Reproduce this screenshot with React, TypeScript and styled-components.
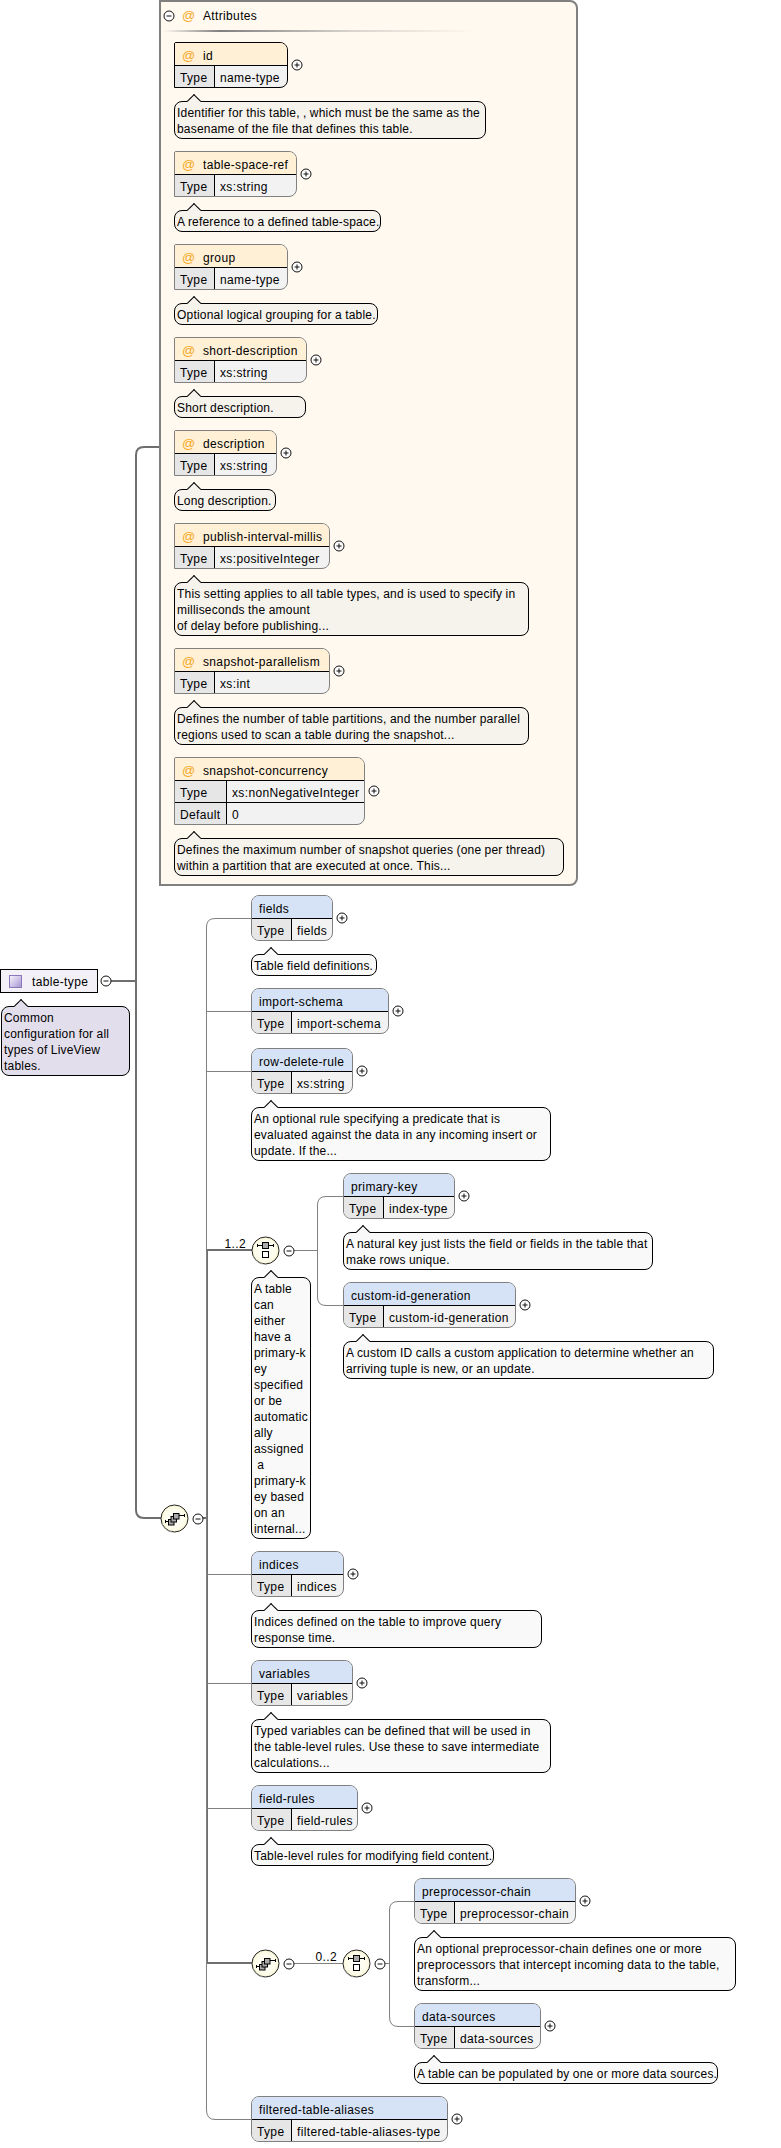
import React from "react";
import styled, { createGlobalStyle } from "styled-components";

const GlobalStyle = createGlobalStyle`
  html, body {
    margin: 0;
    padding: 0;
    background: #fff;
  }
  body {
    font-family: "Liberation Sans", Arial, sans-serif;
    font-size: 12px;
    line-height: 16px;
    color: #000;
  }
`;

const Page = styled.div`
  position: relative;
  z-index: 0;
  width: 781px;
  height: 2148px;
  overflow: hidden;
  display: flex;
`;

const Wires = styled.svg`
  position: absolute;
  left: 0;
  top: 0;
  z-index: -1;
`;

const RootColumn = styled.div`
  width: 159px;
  flex-shrink: 0;
  padding-top: 969px;
`;

const RootRow = styled.div`
  display: flex;
  align-items: center;
  gap: 2px;
`;

const RootBox = styled.div`
  box-sizing: border-box;
  width: 98px;
  height: 24px;
  display: flex;
  align-items: center;
  gap: 10px;
  padding-left: 8px;
  border: 1px solid #000;
  background: #f3f0f8;
  letter-spacing: 0.35px;
`;

const RootSwatch = styled.span`
  box-sizing: border-box;
  width: 13px;
  height: 13px;
  border: 1px solid #8a78bb;
  background: linear-gradient(135deg, #f6f3fb, #a796d4);
`;

const RootLabel = styled.span`
  padding-top: 2px;
`;

const RootNote = styled.div`
  margin: 13px 0 0 1px;
`;

const MainColumn = styled.div`
  width: 419px;
  flex-shrink: 0;
`;

const Panel = styled.div`
  box-sizing: border-box;
  width: 419px;
  border: 2px solid #808080;
  border-radius: 0 8px 8px 0;
  background: #fff9f0;
`;

const PanelHeader = styled.div`
  height: 28px;
  display: flex;
  align-items: center;
  padding-left: 2px;
`;

const PanelTitle = styled.span`
  margin-left: 8px;
  letter-spacing: 0.35px;
`;

const PanelRule = styled.div`
  width: 314px;
  height: 2px;
  margin-left: 2px;
  background: linear-gradient(90deg, #fff9f0 0%, #808080 18%, #d8d4cd 60%, #fff9f0 100%);
`;

const PanelBody = styled.div`
  display: flex;
  flex-direction: column;
  gap: 12px;
  padding: 10px 13px 8px;
`;

const AttrGlyph = styled.span`
  width: 13px;
  margin-left: 7px;
  color: #f7a823;
  font-size: 13px;
  line-height: 16px;
  letter-spacing: 0;
`;

const BelowPanel = styled.div`
  display: flex;
  margin-top: 9px;
`;

const SequenceColumn = styled.div`
  width: 92px;
  flex-shrink: 0;
  padding: 609px 0 0 1px;
  box-sizing: border-box;
`;

const ItemColumn = styled.div`
  display: flex;
  flex-direction: column;
  gap: 12px;
`;

const Item = styled.div<{ $after?: number }>`
  margin-bottom: ${(p) => p.$after ?? 0}px;
`;

const NodeRow = styled.div`
  display: flex;
  align-items: center;
  gap: 3px;
`;

const NodeBox = styled.div<{ $attr?: boolean; $width: number; $dark?: boolean }>`
  box-sizing: border-box;
  width: ${(p) => p.$width}px;
  border: 1px solid ${(p) => (p.$dark ? "#000" : "#808080")};
  border-radius: ${(p) => (p.$attr ? "2px 8px 8px 0" : "8px")};
  overflow: hidden;
  background: #f2f2f2;
  letter-spacing: 0.35px;
`;

const NodeHead = styled.div<{ $attr?: boolean }>`
  box-sizing: border-box;
  height: 22px;
  display: flex;
  align-items: center;
  padding: 4px 0 0 ${(p) => (p.$attr ? "0" : "7px")};
  gap: 8px;
  background: ${(p) => (p.$attr ? "#fff0d6" : "#d6e3f6")};
`;

const NodeLine = styled.div`
  display: flex;
  height: 21px;
  border-top: 1px solid #000;
  line-height: 25px;
`;

const NodeKey = styled.div<{ $width: number }>`
  box-sizing: border-box;
  width: ${(p) => p.$width}px;
  flex-shrink: 0;
  padding-left: 5px;
  border-right: 1px solid #000;
  background: #e6e6e6;
`;

const NodeValue = styled.div`
  padding-left: 5px;
  white-space: nowrap;
`;

const Note = styled.div<{ $width: number; $tone?: "panel" | "root" }>`
  position: relative;
  box-sizing: border-box;
  width: ${(p) => p.$width}px;
  padding: 3px 2px 1px;
  border: 1px solid #000;
  border-radius: 8px;
  white-space: pre;
  letter-spacing: 0.2px;
  word-spacing: -0.2px;
  background: ${(p) =>
    p.$tone === "panel" ? "#f6f2ec" : p.$tone === "root" ? "#e3deec" : "#f9f9f9"};

  &::before {
    content: "";
    position: absolute;
    left: 14px;
    top: -6px;
    box-sizing: border-box;
    width: 10px;
    height: 10px;
    border-top: 1px solid #000;
    border-left: 1px solid #000;
    background: inherit;
    transform: rotate(45deg);
  }
`;

const NoteGap = styled.div`
  margin-top: 13px;
`;

const ParticleRow = styled.div`
  display: flex;
`;

const ParticleHead = styled.div<{ $top: number; $width: number }>`
  box-sizing: border-box;
  width: ${(p) => p.$width}px;
  flex-shrink: 0;
  padding-top: ${(p) => p.$top}px;
`;

const ParticleLine = styled.div`
  display: flex;
  align-items: center;
`;

const ParticleSlot = styled.div`
  position: relative;
  width: 29px;
  height: 29px;
  flex-shrink: 0;
`;

const Occurs = styled.span`
  position: absolute;
  right: calc(100% + 5px);
  top: 0;
  white-space: nowrap;
  letter-spacing: 0.35px;
`;

const Spacer = styled.div<{ $width: number }>`
  width: ${(p) => p.$width}px;
  flex-shrink: 0;
`;

const ParticleNote = styled.div`
  margin-top: 12px;
`;

const ExpanderIcon = styled.svg<{ $gap?: number }>`
  flex-shrink: 0;
  margin-left: ${(p) => p.$gap ?? 0}px;
  display: block;
`;

const Expander = ({ open, gap }: { open?: boolean; gap?: number }) => (
  <ExpanderIcon $gap={gap} width="12" height="12" viewBox="0 0 12 12">
    <circle cx="6" cy="6" r="5" fill="#fff" stroke="#111" strokeWidth="1" />
    <path d="M3.5 6H8.5" stroke="#111" strokeWidth="1" />
    {!open && <path d="M6 3.5V8.5" stroke="#111" strokeWidth="1" />}
  </ExpanderIcon>
);

const ParticleFace = ({ kind }: { kind: "sequence" | "choice" }) => (
  <svg width="29" height="29" viewBox="0 0 29 29">
    <defs>
      <radialGradient id={`face-${kind}`} cx="50%" cy="50%" r="55%">
        <stop offset="0%" stopColor="#ffffff" />
        <stop offset="70%" stopColor="#fdfcea" />
        <stop offset="100%" stopColor="#f6f2c8" />
      </radialGradient>
    </defs>
    <circle cx="14.5" cy="14.5" r="13.5" fill={`url(#face-${kind})`} stroke="#222" strokeWidth="1" />
    <path d="M2 20a13.5 13.5 0 0 0 10 8" fill="none" stroke="#999" strokeWidth="1" />
    {kind === "choice" ? (
      <g stroke="#000" strokeWidth="1">
        <path d="M6.5 9.5H22.5M6.5 8V11M22.5 8V11" fill="none" />
        <rect x="11.5" y="6.5" width="6" height="6" fill="#aaa" />
        <rect x="11.5" y="15.5" width="6" height="6" fill="#fff" />
      </g>
    ) : (
      <g stroke="#000" strokeWidth="1">
        <path d="M5.5 17.5H9M5.5 16V19M18 11.5H24.5M24.5 10V13" fill="none" />
        <rect x="8.5" y="15.5" width="5.5" height="5.5" fill="#aaa" />
        <rect x="11" y="12.5" width="5.5" height="5.5" fill="#aaa" />
        <rect x="13.5" y="9.5" width="5.5" height="5.5" fill="#aaa" />
      </g>
    )}
  </svg>
);

type NodeProps = {
  name: string;
  type: string;
  width: number;
  keyWidth?: number;
  attr?: boolean;
  dark?: boolean;
  fallback?: string;
};

const SchemaNode = ({ name, type, width, keyWidth = 40, attr, dark, fallback }: NodeProps) => (
  <NodeRow>
    <NodeBox $width={width} $attr={attr} $dark={dark}>
      <NodeHead $attr={attr}>
        {attr && <AttrGlyph>@</AttrGlyph>}
        <span>{name}</span>
      </NodeHead>
      <NodeLine>
        <NodeKey $width={keyWidth}>Type</NodeKey>
        <NodeValue>{type}</NodeValue>
      </NodeLine>
      {fallback && (
        <NodeLine>
          <NodeKey $width={keyWidth}>Default</NodeKey>
          <NodeValue>{fallback}</NodeValue>
        </NodeLine>
      )}
    </NodeBox>
    <Expander />
  </NodeRow>
);

const attributes = [
  { name: "id", type: "name-type", width: 114, dark: true, noteWidth: 312,
    note: "Identifier for this table, , which must be the same as the\nbasename of the file that defines this table." },
  { name: "table-space-ref", type: "xs:string", width: 123, noteWidth: 207,
    note: "A reference to a defined table-space." },
  { name: "group", type: "name-type", width: 114, noteWidth: 204,
    note: "Optional logical grouping for a table." },
  { name: "short-description", type: "xs:string", width: 133, noteWidth: 132,
    note: "Short description." },
  { name: "description", type: "xs:string", width: 103, noteWidth: 102,
    note: "Long description." },
  { name: "publish-interval-millis", type: "xs:positiveInteger", width: 156, noteWidth: 355,
    note: "This setting applies to all table types, and is used to specify in\nmilliseconds the amount\nof delay before publishing..." },
  { name: "snapshot-parallelism", type: "xs:int", width: 156, noteWidth: 355,
    note: "Defines the number of table partitions, and the number parallel\nregions used to scan a table during the snapshot..." },
  { name: "snapshot-concurrency", type: "xs:nonNegativeInteger", width: 191, keyWidth: 52, fallback: "0", noteWidth: 390,
    note: "Defines the maximum number of snapshot queries (one per thread)\nwithin a partition that are executed at once. This..." },
];

type ElementProps = {
  name: string;
  type: string;
  width: number;
  note?: string;
  noteWidth?: number;
  after?: number;
};

const ElementItem = ({ name, type, width, note, noteWidth, after }: ElementProps) => (
  <Item $after={after}>
    <SchemaNode name={name} type={type} width={width} />
    {note && (
      <NoteGap>
        <Note $width={noteWidth ?? 0}>{note}</Note>
      </NoteGap>
    )}
  </Item>
);

const App = () => {
  return (
    <Page>
      <GlobalStyle />
      <Wires width="781" height="2148" viewBox="0 0 781 2148">
        <g fill="none" stroke="#6f6f6f" strokeWidth="2">
          <path d="M160 447H144Q136 447 136 455V1510Q136 1518 144 1518H161" />
          <path d="M110 981H136" />
          <path d="M207 1250V1963M207 1250H252M207 1963H252M202 1518H207" />
        </g>
        <g fill="none" stroke="#808080" strokeWidth="1">
          <path d="M252 918.5H215Q206.5 918.5 206.5 927V2110Q206.5 2119.5 215 2119.5H252" />
          <path d="M207 1011.5H252M207 1071.5H252M207 1574.5H252M207 1683.5H252M207 1808.5H252" />
          <path d="M292 1250.5H317M343 1196.5H326Q317.5 1196.5 317.5 1205V1297Q317.5 1305.5 326 1305.5H343" />
          <path d="M294 1963.5H343M384 1963.5H389M414 1901.5H398Q389.5 1901.5 389.5 1910V2017Q389.5 2026.5 398 2026.5H414" />
        </g>
      </Wires>

      <RootColumn>
        <RootRow>
          <RootBox>
            <RootSwatch />
            <RootLabel>table-type</RootLabel>
          </RootBox>
          <Expander open />
        </RootRow>
        <RootNote>
          <Note $width={129} $tone="root">{"Common\nconfiguration for all\ntypes of LiveView\ntables."}</Note>
        </RootNote>
      </RootColumn>

      <MainColumn>
        <Panel>
          <PanelHeader>
            <Expander open />
            <AttrGlyph>@</AttrGlyph>
            <PanelTitle>Attributes</PanelTitle>
          </PanelHeader>
          <PanelRule />
          <PanelBody>
            {attributes.map((a) => (
              <div key={a.name}>
                <SchemaNode
                  attr
                  name={a.name}
                  type={a.type}
                  width={a.width}
                  keyWidth={a.keyWidth}
                  dark={a.dark}
                  fallback={a.fallback}
                />
                <NoteGap>
                  <Note $width={a.noteWidth} $tone="panel">{a.note}</Note>
                </NoteGap>
              </div>
            ))}
          </PanelBody>
        </Panel>

        <BelowPanel>
          <SequenceColumn>
            <ParticleLine>
              <ParticleSlot>
                <ParticleFace kind="sequence" />
              </ParticleSlot>
              <Expander open gap={3} />
            </ParticleLine>
          </SequenceColumn>

          <ItemColumn>
            <ElementItem name="fields" type="fields" width={82} noteWidth={126} note="Table field definitions." />
            <ElementItem name="import-schema" type="import-schema" width={138} after={2} />
            <ElementItem
              name="row-delete-rule"
              type="xs:string"
              width={102}
              noteWidth={300}
              note={"An optional rule specifying a predicate that is\nevaluated against the data in any incoming insert or\nupdate. If the..."}
            />

            <ParticleRow>
              <ParticleHead $top={63} $width={92}>
                <ParticleLine>
                  <ParticleSlot>
                    <Occurs>1..2</Occurs>
                    <ParticleFace kind="choice" />
                  </ParticleSlot>
                  <Expander open gap={3} />
                </ParticleLine>
                <ParticleNote>
                  <Note $width={60}>
                    {"A table\ncan\neither\nhave a\nprimary-k\ney\nspecified\nor be\nautomatic\nally\nassigned\n a\nprimary-k\ney based\non an\ninternal..."}
                  </Note>
                </ParticleNote>
              </ParticleHead>
              <ItemColumn>
                <ElementItem
                  name="primary-key"
                  type="index-type"
                  width={112}
                  noteWidth={310}
                  note={"A natural key just lists the field or fields in the table that\nmake rows unique."}
                />
                <ElementItem
                  name="custom-id-generation"
                  type="custom-id-generation"
                  width={173}
                  noteWidth={371}
                  note={"A custom ID calls a custom application to determine whether an\narriving tuple is new, or an update."}
                />
              </ItemColumn>
            </ParticleRow>

            <ElementItem
              name="indices"
              type="indices"
              width={93}
              noteWidth={291}
              note={"Indices defined on the table to improve query\nresponse time."}
            />
            <ElementItem
              name="variables"
              type="variables"
              width={102}
              noteWidth={300}
              note={"Typed variables can be defined that will be used in\nthe table-level rules. Use these to save intermediate\ncalculations..."}
            />
            <ElementItem
              name="field-rules"
              type="field-rules"
              width={107}
              noteWidth={243}
              note="Table-level rules for modifying field content."
            />

            <ParticleRow>
              <ParticleHead $top={71} $width={163}>
                <ParticleLine>
                  <ParticleSlot>
                    <ParticleFace kind="sequence" />
                  </ParticleSlot>
                  <Expander open gap={3} />
                  <Spacer $width={47} />
                  <ParticleSlot>
                    <Occurs>0..2</Occurs>
                    <ParticleFace kind="choice" />
                  </ParticleSlot>
                  <Expander open gap={3} />
                </ParticleLine>
              </ParticleHead>
              <ItemColumn>
                <ElementItem
                  name="preprocessor-chain"
                  type="preprocessor-chain"
                  width={162}
                  noteWidth={322}
                  note={"An optional preprocessor-chain defines one or more\npreprocessors that intercept incoming data to the table,\ntransform..."}
                />
                <ElementItem
                  name="data-sources"
                  type="data-sources"
                  width={127}
                  noteWidth={304}
                  note="A table can be populated by one or more data sources."
                />
              </ItemColumn>
            </ParticleRow>

            <ElementItem name="filtered-table-aliases" type="filtered-table-aliases-type" width={197} />
          </ItemColumn>
        </BelowPanel>
      </MainColumn>
    </Page>
  );
};

export default App;
